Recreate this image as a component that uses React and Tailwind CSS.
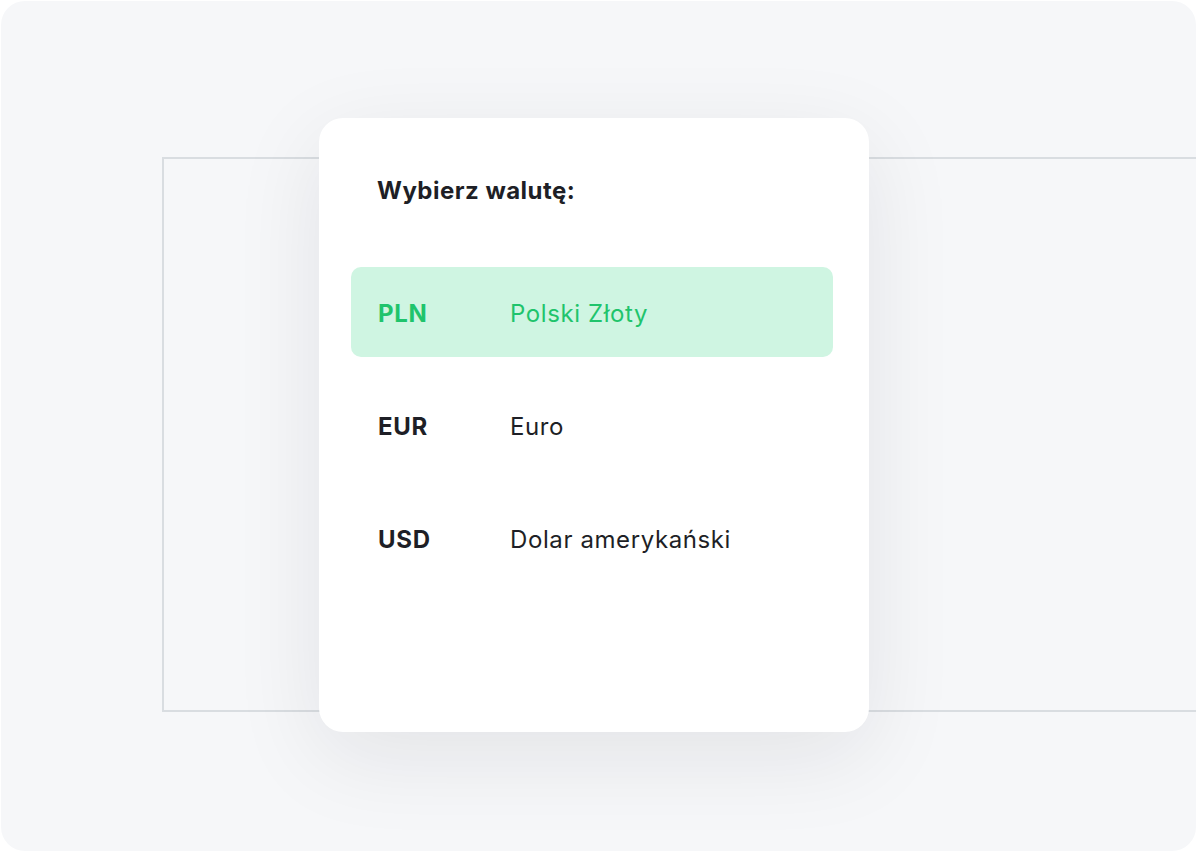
// Currency picker card over a faint frame
const CURRENCIES = [
  { code: 'PLN', name: 'Polski Złoty', active: true },
  { code: 'EUR', name: 'Euro' },
  { code: 'USD', name: 'Dolar amerykański' },
];

const CurrencyRow = ({ code, name, active }) => (
  <div
    className={`flex items-center h-[90px] rounded-[10px] pl-[27px] pt-[3px] ${
      active ? 'bg-[#cff5e2] text-[#1fc46c]' : 'text-[#1e1f26]'
    }`}
  >
    <span className="w-[132px] text-[24px] font-bold tracking-[0.03em]">{code}</span>
    <span className="text-[24px] font-normal tracking-[0.025em]">{name}</span>
  </div>
);

export default function App() {
  return (
    <div className="w-[1199px] h-[855px] bg-white pt-px pl-px" style={{ fontFamily: 'Inter, "Noto Sans", sans-serif' }}>
      <div className="relative w-[1195px] h-[850px] rounded-[24px] bg-[#f6f7f9] overflow-hidden">
        {/* background frame outline */}
        <div className="absolute left-[161px] top-[156px] w-[1060px] h-[555px] border-2 border-[#d9dde1]" />

        {/* card */}
        <div className="relative ml-[318px] mt-[117px] inline-block w-[550px] h-[614px] rounded-[24px] bg-white shadow-[0_24px_90px_rgba(20,25,40,0.085)] px-8 pt-[61px]">
          <h2 className="pl-[26px] text-[24px] font-bold tracking-[0.02em] text-[#1e1f26] leading-none">Wybierz walutę:</h2>
          <div className="mt-[64px] w-[482px] flex flex-col gap-[23px]">
            {CURRENCIES.map(c => (
              <CurrencyRow key={c.code} {...c} />
            ))}
          </div>
        </div>
      </div>
    </div>
  );
}
